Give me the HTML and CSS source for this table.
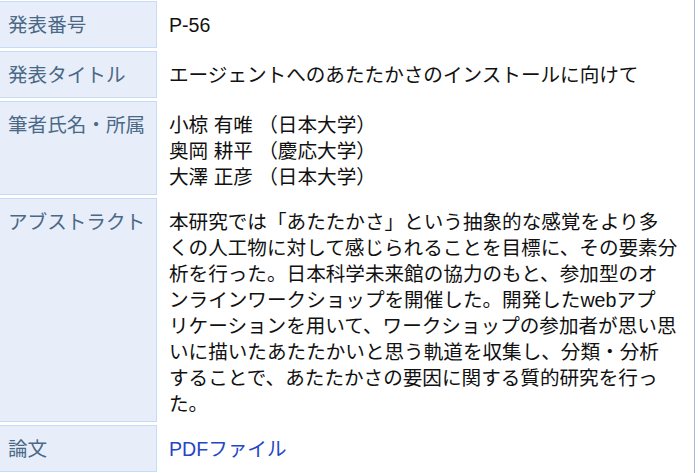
FILE: index.html
```html
<!DOCTYPE html>
<html lang="ja">
<head>
  <meta charset="UTF-8" />
  <meta name="viewport" content="width=device-width, initial-scale=1" />
  <title>P-56 エージェントへのあたたかさのインストールに向けて</title>
  <link rel="stylesheet" href="styles.css">
</head>
<body>

  <div class="sheet">
    <table class="info">
      <tr>
        <th>発表番号</th>
        <td>P-56</td>
      </tr>
      <tr>
        <th>発表タイトル</th>
        <td>エージェントへのあたたかさのインストールに向けて</td>
      </tr>
      <tr>
        <th>筆者氏名・所属</th>
        <td>
          小椋 有唯 （日本大学）<br>
          奥岡 耕平 （慶応大学）<br>
          大澤 正彦 （日本大学）
        </td>
      </tr>
      <tr>
        <th>アブストラクト</th>
        <td>本研究では「あたたかさ」という抽象的な感覚をより多<br>くの人工物に対して感じられることを目標に、その要素分<br>析を行った。日本科学未来館の協力のもと、参加型のオ<br>ンラインワークショップを開催した。開発したwebアプ<br>リケーションを用いて、ワークショップの参加者が思い思<br>いに描いたあたたかいと思う軌道を収集し、分類・分析<br>することで、あたたかさの要因に関する質的研究を行っ<br>た。</td>
      </tr>
      <tr>
        <th>論文</th>
        <td><a href="#">PDFファイル</a></td>
      </tr>
    </table>
  </div>

</body>
</html>
```

FILE: styles.css
```css
html, body {
  margin: 0;
  padding: 0;
  background: #fff;
  font-family: "Liberation Sans", "Noto Sans CJK JP", sans-serif;
  font-size: 19.6px;
  line-height: 26px;
  color: #111;
}

/* 外枠：右側だけ線が見える */
.sheet {
  width: 694px;
  min-height: 100vh;
  border-right: 1px solid #a9b8d8;
  overflow: hidden;
}

.info {
  border-collapse: separate;
  border-spacing: 3px;
  margin: -2px 0 0 -4px;
  width: 698px;
}

.info th,
.info td {
  box-sizing: border-box;
  height: 47px;
  padding: 10px 4px 4px 8px;
  vertical-align: top;
  text-align: left;
  font-weight: normal;
}

/* 見出しセル */
.info th {
  width: 158px;
  background: #e8eef9;
  border: 1px solid #c6dbf6;
  color: #4a6987;
  white-space: nowrap;
}

.info td {
  background: #fff;
  border: 1px solid #fff;
}

.info a {
  color: #2446c8;
  text-decoration: none;
}
```
